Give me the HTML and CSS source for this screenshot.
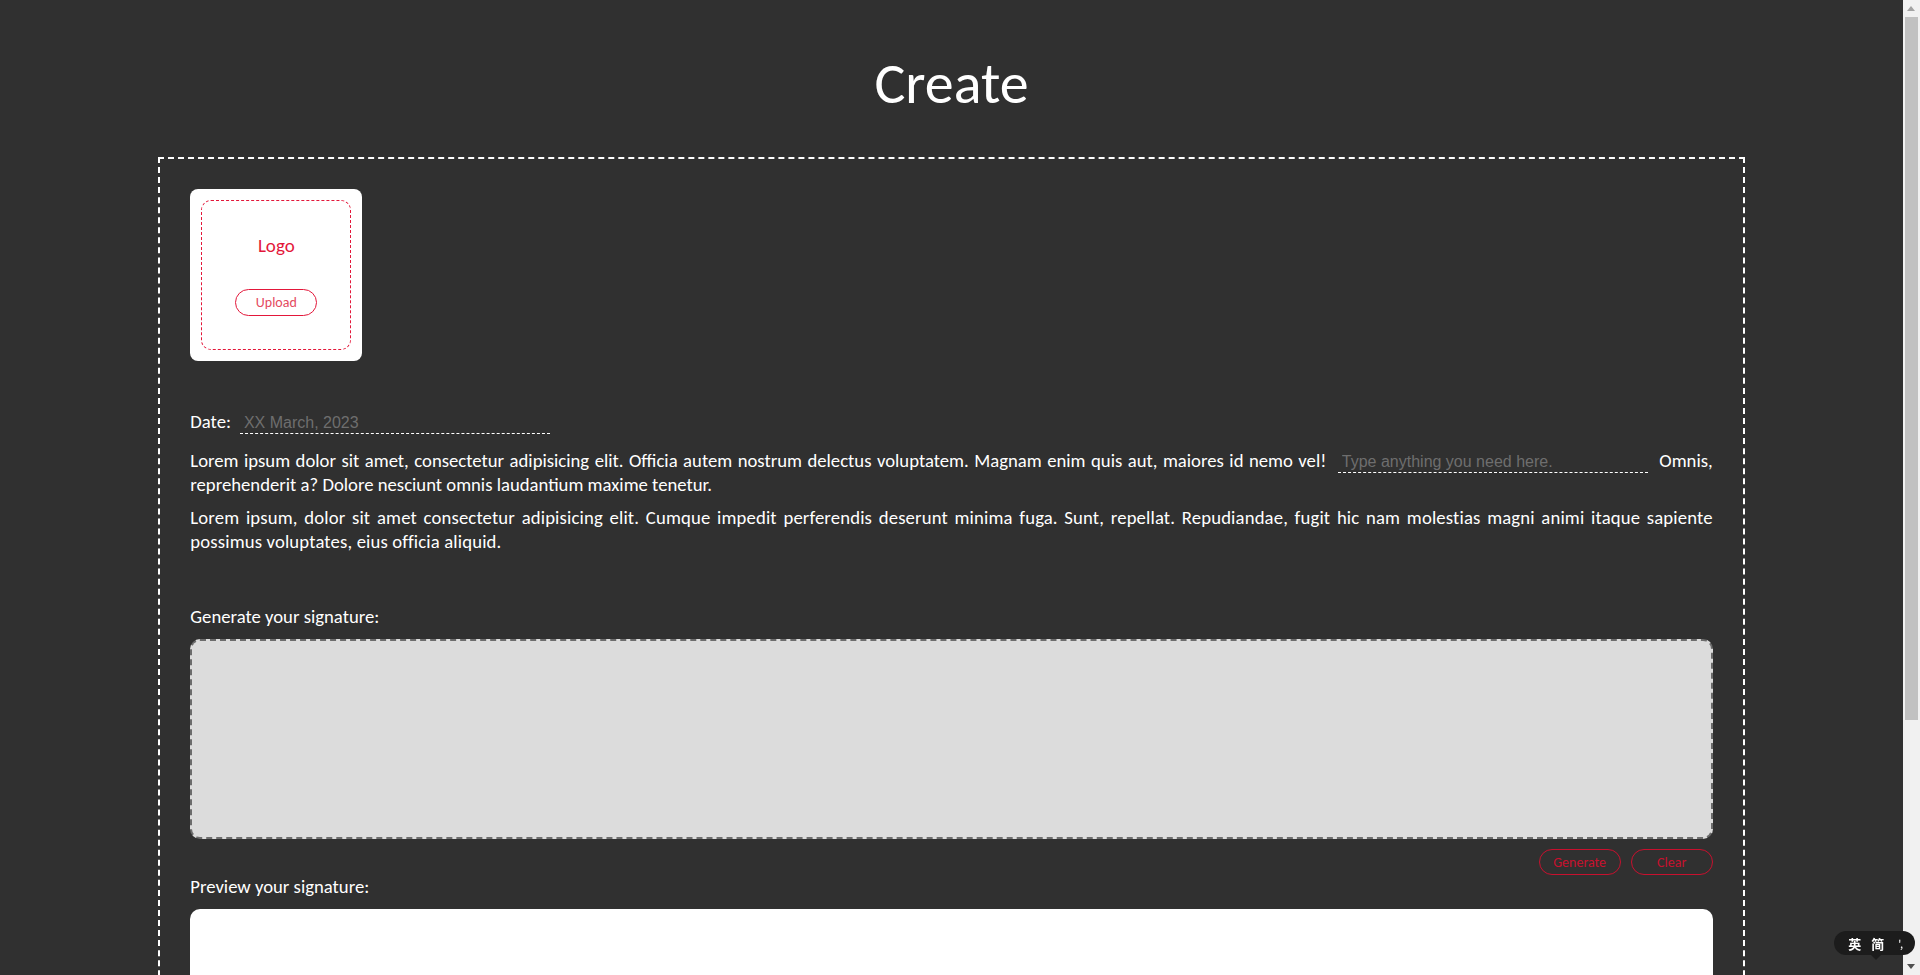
FILE: index.html
```html
<!DOCTYPE html>
<html lang="en">
<head>
<meta charset="utf-8">
<title>Create</title>
<link rel="stylesheet" href="styles.css">
</head>
<body>
  <h1 class="title">Create</h1>
  <main class="sheet">
    <div class="logo-card">
      <div class="logo-drop">
        <span class="logo-label">Logo</span>
        <button class="btn-upload" type="button">Upload</button>
      </div>
    </div>

    <div class="date-row">
      <label class="date-label">Date:</label>
      <input class="line-input" type="text" placeholder="XX March, 2023">
    </div>

    <p class="text text-first">Lorem ipsum dolor sit amet, consectetur adipisicing elit. Officia autem nostrum delectus voluptatem. Magnam enim quis aut, maiores id nemo vel! <input class="line-input inline" type="text" placeholder="Type anything you need here."> Omnis, reprehenderit a? Dolore nesciunt omnis laudantium maxime tenetur.</p>
    <p class="text text-second">Lorem ipsum, dolor sit amet consectetur adipisicing elit. Cumque impedit perferendis deserunt minima fuga. Sunt, repellat. Repudiandae, fugit hic nam molestias magni animi itaque sapiente possimus voluptates, eius officia aliquid.</p>

    <div class="sig-label sig-first">Generate your signature:</div>
    <div class="sig-pad"></div>
    <div class="btn-row">
      <button class="btn-outline" type="button">Generate</button>
      <button class="btn-outline" type="button">Clear</button>
    </div>

    <div class="sig-label">Preview your signature:</div>
    <div class="sig-preview"></div>
    <div class="btn-row">
      <button class="btn-outline" type="button">Download</button>
    </div>
  </main>

  <div class="scrollbar" aria-hidden="true">
    <span class="sb-arrow sb-up"></span>
    <span class="sb-track"><span class="sb-thumb"></span></span>
    <span class="sb-arrow sb-down"></span>
  </div>

  <div class="ime">
    <span>英</span><span>简</span><span class="ime-punct">&#39;,</span>
  </div>
</body>
</html>
```
FILE: styles.css
```css
html { background: #303030; overflow: hidden; }
body {
  margin: 0 17px 0 0;
  background: #303030;
  color: #ffffff;
  font-family: Carlito, Lato, "Noto Sans", sans-serif;
  padding-bottom: 126px;
}

.title {
  margin: 50px 0 40px;
  font-size: 58px;
  font-weight: 400;
  line-height: 67px;
  text-align: center;
}

.sheet {
  width: 80%;
  margin: 0 auto;
  padding: 30px;
  border: 2px dashed #ffffff;
}

.logo-card {
  width: 172px;
  height: 172px;
  box-sizing: border-box;
  padding: 11px;
  background: #ffffff;
  border-radius: 8px;
}
.logo-drop {
  height: 100%;
  box-sizing: border-box;
  border: 1px dashed #e3173a;
  border-radius: 10px;
  display: flex;
  flex-direction: column;
  align-items: center;
  justify-content: center;
  gap: 31px;
}
.logo-label {
  color: #e3173a;
  font-size: 19px;
  line-height: 24px;
}
.btn-upload {
  width: 82px;
  height: 27px;
  border: 1px solid #e3173a;
  border-radius: 14px;
  background: #ffffff;
  color: #e44a60;
  font-family: inherit;
  font-size: 14px;
  padding: 0;
}

.date-row {
  margin-top: 49px;
  display: flex;
  align-items: baseline;
  gap: 9px;
  font-size: 18.7px;
}
.date-label { line-height: 24px; }

.line-input {
  width: 310px;
  box-sizing: border-box;
  background: transparent;
  border: 0;
  border-bottom: 1px dashed #ffffff;
  outline: none;
  color: #dddddd;
  font-family: "Liberation Sans", Arial, sans-serif;
  font-size: 16px;
  padding: 0 4px 0 4px;
  height: 20px;
}
.line-input::placeholder { color: #6e6e6e; }
.line-input.inline { margin: 0 6px; }

.text {
  margin: 10px 0 0;
  font-size: 18.7px;
  line-height: 23.5px;
  text-align: justify;
}
.text-first { margin-top: 15px; }
.text-second { letter-spacing: 0.15px; }

.sig-label {
  font-size: 18.7px;
  line-height: 23px;
  margin-bottom: 11px;
}
.sig-first { margin-top: 52px; }

.sig-pad {
  height: 200px;
  box-sizing: border-box;
  background: #dcdcdc;
  border: 2px dashed #6c6c6c;
  border-radius: 10px;
}

.btn-row {
  display: flex;
  justify-content: flex-end;
  gap: 10px;
  margin-top: 10px;
}
.btn-outline {
  width: 82px;
  height: 26px;
  padding: 0;
  border: 1px solid #c8102e;
  border-radius: 13px;
  background: transparent;
  color: #c8102e;
  font-family: inherit;
  font-size: 14px;
}

.sig-preview {
  height: 200px;
  background: #ffffff;
  border-radius: 10px;
}

.scrollbar {
  position: fixed;
  top: 0;
  right: 0;
  width: 17px;
  height: 100%;
  background: #f1f1f1;
  display: flex;
  flex-direction: column;
}
.sb-arrow {
  height: 17px;
  flex: none;
  position: relative;
}
.sb-arrow::before {
  content: "";
  position: absolute;
  left: 4px;
  border-left: 4.5px solid transparent;
  border-right: 4.5px solid transparent;
}
.sb-up::before { top: 6px; border-bottom: 5px solid #a3a3a3; }
.sb-down::before { top: 6px; border-top: 5px solid #505050; }
.sb-track { flex: 1; padding: 0 2px; }
.sb-thumb {
  display: block;
  height: 703px;
  background: #c1c1c1;
}

.ime {
  position: fixed;
  right: 5px;
  bottom: 20px;
  height: 24px;
  padding: 0 12px 0 14px;
  display: flex;
  align-items: center;
  gap: 10px;
  background: #1c1c1c;
  border-radius: 12px;
  color: #ffffff;
  font-family: "Noto Sans CJK SC", sans-serif;
  font-size: 13px;
  font-weight: 700;
  z-index: 10;
}
.ime::after {
  content: "";
  position: absolute;
  left: 37px;
  bottom: -5px;
  border-left: 5px solid transparent;
  border-right: 5px solid transparent;
  border-top: 5px solid #1c1c1c;
}
.ime-punct { font-size: 11px; font-weight: 400; margin-left: 4px; }
```
